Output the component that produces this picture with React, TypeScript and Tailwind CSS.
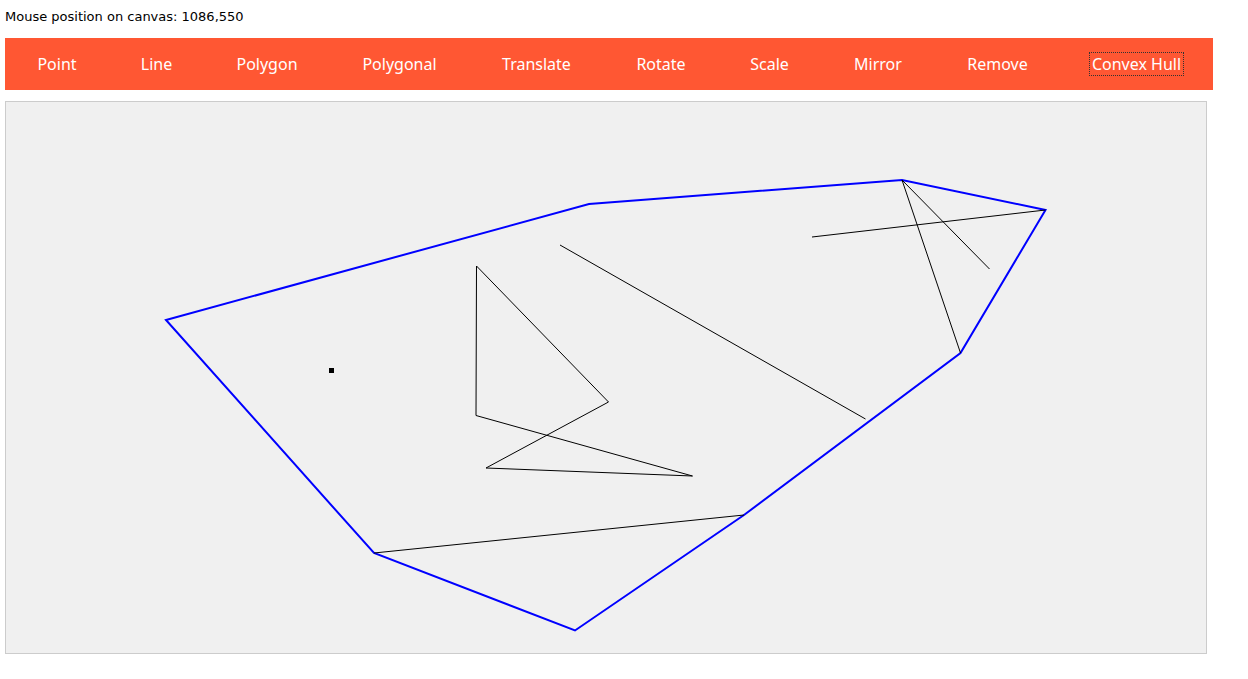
const tools = [
  { label: "Point", w: "w-[104px]" },
  { label: "Line", w: "w-[95px]" },
  { label: "Polygon", w: "w-[126px]" },
  { label: "Polygonal", w: "w-[139px]" },
  { label: "Translate", w: "w-[135px]" },
  { label: "Rotate", w: "w-[114px]" },
  { label: "Scale", w: "w-[103px]" },
  { label: "Mirror", w: "w-[114px]" },
  { label: "Remove", w: "w-[125px]" },
  { label: "Convex Hull", w: "w-[153px]" },
];

// hull and segments in page coordinates; the svg viewBox starts at the canvas origin
const hull = "166,320 589,204 902,180 1045.5,210 960.5,353 744,515 575,630.5 374,553";

const segments: [number, number, number, number][] = [
  [902, 180, 989.5, 269],
  [902, 180, 960.5, 353],
  [812, 237, 1045.5, 210],
  [560, 245, 865.5, 419],
  [374, 553, 744, 515],
];

const shape = "476.5,266 608.5,402 486,468 692.5,476 476,415.5";

export default function App() {
  return (
    <div className="min-h-screen bg-white px-[5px] text-black">
      <div className="pt-[8px] pb-[12px] text-[13px] leading-[18px] [font-family:'DejaVu_Sans',sans-serif]">
        Mouse position on canvas: 1086,550
      </div>

      <div className="inline-flex bg-[#ff5733] [font-family:'Noto_Sans',sans-serif]">
        {tools.map(({ label, w }) => (
          <button key={label} className={`${w} flex justify-center py-[15px] text-[16px] leading-[22px] text-white`}>
            {label === "Convex Hull" ? (
              <span className="outline-1 outline-dotted outline-[#333] px-[2px]">{label}</span>
            ) : (
              label
            )}
          </button>
        ))}
      </div>

      <div className="mt-[11px] w-[1202px] h-[553px] border border-[#cccccc] bg-[#f0f0f0]">
        <svg width="1200" height="551" viewBox="6 102 1200 551" className="block">
          <polygon points={hull} fill="none" stroke="#0000ff" strokeWidth="2" />
          {segments.map(([x1, y1, x2, y2], i) => (
            <line key={i} x1={x1} y1={y1} x2={x2} y2={y2} stroke="#000" strokeWidth="1" />
          ))}
          <polygon points={shape} fill="none" stroke="#000" strokeWidth="1" />
          <rect x="329" y="368" width="5" height="5" fill="#000" />
        </svg>
      </div>
    </div>
  );
}
